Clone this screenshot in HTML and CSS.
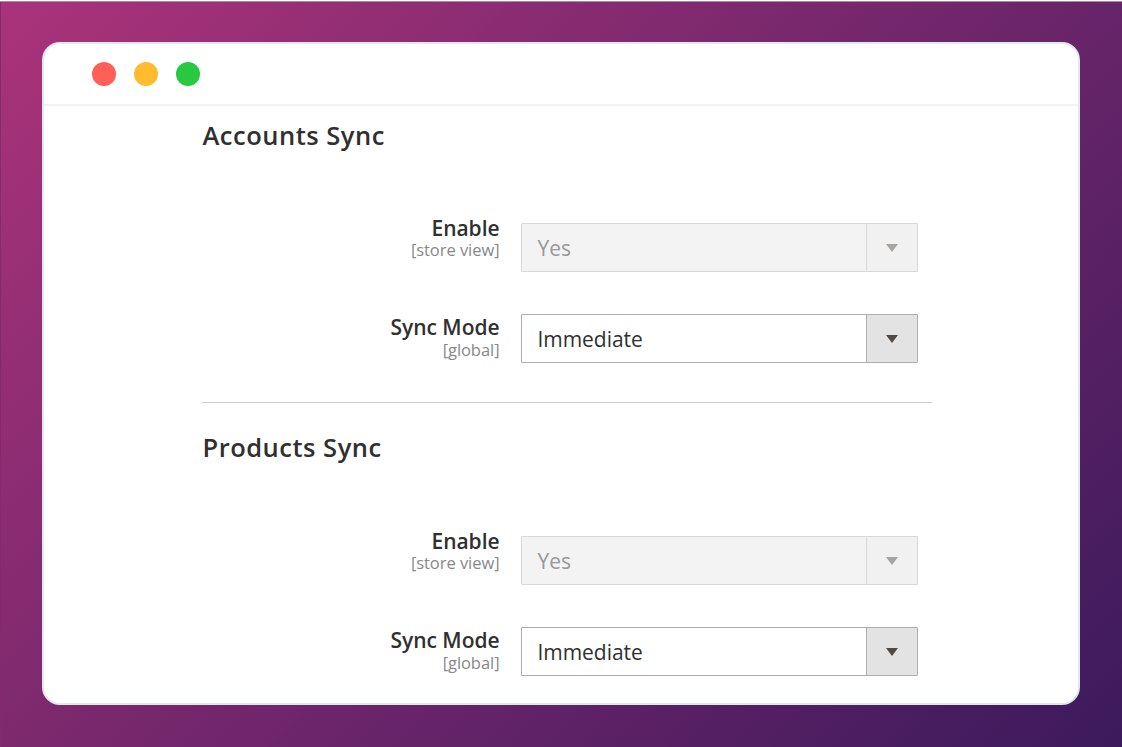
FILE: index.html
```html
<!DOCTYPE html>
<html lang="en">
<head>
<meta charset="utf-8">
<title>Sync settings</title>
<link rel="stylesheet" href="styles.css">
</head>
<body>
<div class="backdrop">
<main class="window">
  <header class="titlebar"><span class="dot red"></span><span class="dot yellow"></span><span class="dot green"></span></header>
  <div class="content">
    <section class="group">
      <h2>Accounts Sync</h2>
      <div class="field disabled">
        <div class="label"><span class="name">Enable</span><span class="scope">[store view]</span></div>
        <div class="select"><span class="value">Yes</span><span class="arrow"><svg width="12" height="8" viewBox="0 0 12 8"><path d="M0 0H12L6 8Z"/></svg></span></div>
      </div>
      <div class="field">
        <div class="label"><span class="name">Sync Mode</span><span class="scope">[global]</span></div>
        <div class="select"><span class="value">Immediate</span><span class="arrow"><svg width="12" height="8" viewBox="0 0 12 8"><path d="M0 0H12L6 8Z"/></svg></span></div>
      </div>
    </section>
    <section class="group second">
      <h2>Products Sync</h2>
      <div class="field disabled">
        <div class="label"><span class="name">Enable</span><span class="scope">[store view]</span></div>
        <div class="select"><span class="value">Yes</span><span class="arrow"><svg width="12" height="8" viewBox="0 0 12 8"><path d="M0 0H12L6 8Z"/></svg></span></div>
      </div>
      <div class="field">
        <div class="label"><span class="name">Sync Mode</span><span class="scope">[global]</span></div>
        <div class="select"><span class="value">Immediate</span><span class="arrow"><svg width="12" height="8" viewBox="0 0 12 8"><path d="M0 0H12L6 8Z"/></svg></span></div>
      </div>
    </section>
  </div>
</main>
</div>
</body>
</html>
```
FILE: styles.css
```css
* { box-sizing: border-box; }
body { margin: 0; background: #fff; font-family: "Open Sans", sans-serif; color: #303030; overflow: hidden; }
.backdrop { height: 746px; margin-top: 1px; padding: 40px 42px 42px; border-top: 1px solid #a488ad; background: linear-gradient(135deg, #aa337a 0%, #3b1a5c 100%); box-shadow: inset 1px 0 #84296c; }
.window { height: 663px; border: 2px solid #e1e8f0; border-radius: 18px; background: #fff; overflow: hidden; }
.titlebar { height: 62px; border-bottom: 2px solid #f2f2f2; display: flex; gap: 18px; padding: 18px 48px; }
.dot { width: 24px; height: 24px; border-radius: 50%; }
.red { background: #ff5f57; }
.yellow { background: #febc2e; }
.green { background: #28c840; }
.content { width: 730px; margin-left: 158px; }
.group { height: 297px; padding-top: 11px; border-bottom: 1px solid #ccc; }
.second { height: auto; border: 0; padding-top: 26px; }
h2 { margin: 0 0 70px; padding-left: .5px; height: 36px; line-height: 36px; font-size: 25.5px; font-weight: 600; letter-spacing: .5px; white-space: nowrap; }
.second h2 { margin-bottom: 71px; }
.field { display: flex; gap: 21.5px; height: 49px; margin-bottom: 42px; }
.label { width: 297.5px; display: flex; flex-direction: column; align-items: flex-end; margin-top: -9px; white-space: nowrap; }
.field:not(.disabled) .label { margin-top: -1px; }
.name { height: 25px; line-height: 28px; font-size: 21px; font-weight: 600; letter-spacing: -.05px; }
.scope { height: 22px; line-height: 22px; font-size: 16.5px; letter-spacing: -.05px; color: #888; }
.field:not(.disabled) .scope { margin-top: 1px; }
.select { width: 396.5px; border: 1px solid #adadad; border-radius: 1px; display: flex; }
.value { flex: 1; padding: 1px 0 0 15.5px; font-size: 21px; line-height: 47px; height: 47px; letter-spacing: -.05px; }
.arrow { width: 51px; border-left: 1px solid #adadad; background: #e3e3e3; display: flex; align-items: center; justify-content: center; padding: 1px 0 0 1px; fill: #514943; }
.disabled .select { background: #f3f3f3; border-color: #d8d8d8; color: #989898; }
.disabled .arrow { background: #f1f1f1; border-color: #d8d8d8; fill: #a8a4a1; }
```
